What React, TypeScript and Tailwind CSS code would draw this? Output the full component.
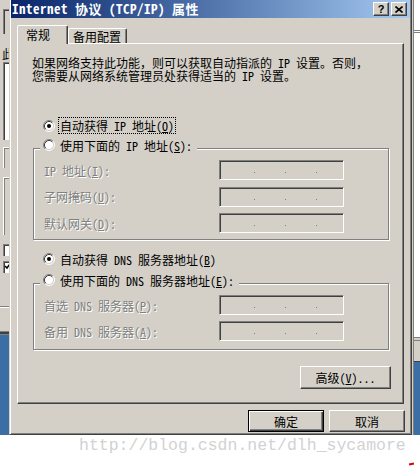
import React from "react";

function Radio({ checked }: { checked?: boolean }) {
  return (
    <svg width="12" height="12" viewBox="0 0 12 12" className="shrink-0">
      <circle cx="6" cy="6" r="4.5" fill="#ffffff" />
      <path d="M2.11 9.89 A5.5 5.5 0 0 1 9.89 2.11" stroke="#808080" fill="none" />
      <path d="M9.89 2.11 A5.5 5.5 0 0 1 2.11 9.89" stroke="#ffffff" fill="none" />
      <path d="M2.82 9.18 A4.5 4.5 0 0 1 9.18 2.82" stroke="#404040" fill="none" />
      <path d="M9.18 2.82 A4.5 4.5 0 0 1 2.82 9.18" stroke="#d4d0c8" fill="none" />
      {checked && <circle cx="6" cy="6" r="2" fill="#000000" />}
    </svg>
  );
}

function RadioRow({
  checked,
  focus,
  children,
}: {
  checked?: boolean;
  focus?: boolean;
  children: React.ReactNode;
}) {
  return (
    <div className="flex items-center">
      <Radio checked={checked} />
      <span
        className={
          focus
            ? "ml-[3px] h-[17px] flex items-center border border-dotted border-black px-[1px] whitespace-pre"
            : "ml-[3px] h-[17px] flex items-center border border-transparent px-[1px] whitespace-pre"
        }
      >
        {children}
      </span>
    </div>
  );
}

function IpBox() {
  return (
    <div className="w-[125px] h-[20px] bg-[#d4d0c8] border border-t-[#808080] border-l-[#808080] border-r-white border-b-white shadow-[inset_1px_1px_0_#404040,inset_-1px_-1px_0_#d4d0c8]">
      <div className="flex pl-[34px] pt-[11px] gap-[30px]">
        <span className="block w-px h-px bg-[#808080]" />
        <span className="block w-px h-px bg-[#808080]" />
        <span className="block w-px h-px bg-[#808080]" />
      </div>
    </div>
  );
}

function FieldRow({ children }: { children: React.ReactNode }) {
  return (
    <div className="flex items-center h-[20px]">
      <div className="w-[175px] whitespace-pre text-[#808080] [text-shadow:1px_1px_0_#ffffff]">{children}</div>
      <IpBox />
    </div>
  );
}

function Button({
  children,
  w,
  def,
}: {
  children: React.ReactNode;
  w: string;
  def?: boolean;
}) {
  if (def) {
    return (
      <div
        className={`${w} h-[22px] flex items-center justify-center bg-[#d4d0c8] border border-black shadow-[inset_1px_1px_0_#ffffff,inset_-1px_-1px_0_#404040,inset_-2px_-2px_0_#808080] whitespace-pre`}
      >
        {children}
      </div>
    );
  }
  return (
    <div
      className={`${w} flex items-center justify-center bg-[#d4d0c8] border border-t-white border-l-white border-r-[#404040] border-b-[#404040] shadow-[inset_-1px_-1px_0_#808080] whitespace-pre`}
    >
      {children}
    </div>
  );
}

function TitleButton({ children }: { children: React.ReactNode }) {
  return (
    <div className="w-[16px] h-[14px] flex items-center justify-center bg-[#d4d0c8] border border-t-white border-l-white border-r-[#404040] border-b-[#404040] shadow-[inset_-1px_-1px_0_#808080]">
      {children}
    </div>
  );
}

function LeftStrip() {
  return (
    <div className="w-[9px] h-[435px] shrink-0 flex flex-col bg-[#d4d0c8] overflow-hidden">
      <div className="mt-[9px] ml-[3px] h-[25px] border-l border-t border-[#808080] shadow-[inset_1px_1px_0_#404040]" />
      <div className="mt-[13px] ml-[2px] h-[13px] text-[12px] leading-[13px] whitespace-nowrap">此</div>
      <div className="mt-[2px] ml-[3px] h-[78px] bg-white border-l border-t border-[#808080] shadow-[inset_1px_1px_0_#404040]" />
      <div className="mt-[7px] ml-[3px] h-[21px] border-l border-t border-white shadow-[inset_1px_1px_0_#808080]" />
      <div className="mt-[9px] ml-[3px] h-[58px] border-l border-t border-white shadow-[inset_1px_1px_0_#808080]" />
      <div className="mt-[9px] ml-[3px] h-[12px] bg-white border-l border-t border-[#808080] shadow-[inset_1px_1px_0_#404040]" />
      <div className="mt-[5px] ml-[3px] h-[12px] bg-white border-l border-t border-[#808080] shadow-[inset_1px_1px_0_#404040]">
        <svg width="6" height="10" viewBox="0 0 6 10">
          <path d="M1 4 L3 6 L6 2" stroke="#000" strokeWidth="1.5" fill="none" />
        </svg>
      </div>
      <div className="mt-[33px] h-px bg-[#808080]" />
      <div className="h-px bg-white" />
      <div className="mt-[23px] h-px bg-[#808080]" />
      <div className="h-[2px] bg-[#404040]" />
      <div className="h-px bg-[#808080]" />
      <div className="flex-1 bg-[#3a6ea5]" />
    </div>
  );
}

function RightStrip() {
  return (
    <div className="w-[8px] h-[435px] shrink-0 flex flex-col bg-white border-l border-l-[#d4d0c8]">
      <div className="flex-1 flex flex-col border-l border-l-[#808080]">
        <div className="h-[30px]" />
        <div className="h-px bg-[#808080]" />
        <div className="h-px bg-white" />
        <div className="h-px bg-[#808080]" />
        <div className="h-[304px]" />
        <div className="h-px bg-[#808080]" />
        <div className="h-[2px] bg-[#d4d0c8]" />
        <div className="h-px bg-[#808080]" />
        <div className="h-[20px] bg-[#d4d0c8]" />
        <div className="h-px bg-[#404040]" />
        <div className="flex-1 bg-[#3a6ea5]" />
      </div>
    </div>
  );
}

function Dialog() {
  return (
    <div className="w-[403px] h-[435px] shrink-0 flex flex-col bg-[#d4d0c8] border-l border-l-[#d4d0c8] border-r border-r-[#404040] border-b border-b-[#404040] shadow-[inset_1px_0_0_#ffffff,inset_-1px_-1px_0_#808080] px-[1px]">
      {/* Title bar */}
      <div className="flex items-center h-[18px] bg-linear-to-r from-[#0a246a] to-[#a6caf0] pl-[1px] pr-[3px]">
        <div className="flex-1 font-bold text-white text-[13px] leading-[14px] tracking-[0.5px] whitespace-pre">
          Internet 协议 (TCP/IP) 属性
        </div>
        <div className="flex gap-[2px]">
          <TitleButton>
            <span className="font-bold text-[11px] leading-[11px] text-black [font-family:'Liberation_Sans',sans-serif]">?</span>
          </TitleButton>
          <TitleButton>
            <svg width="8" height="7" viewBox="0 0 8 7">
              <path d="M0.5 0.5 L7.5 6.5 M7.5 0.5 L0.5 6.5" stroke="#000" strokeWidth="1.6" fill="none" />
            </svg>
          </TitleButton>
        </div>
      </div>

      {/* Tabs */}
      <div className="flex items-end h-[18px] mt-[7px] ml-[6px]">
        <div className="relative z-10 w-[51px] h-[19px] -mb-px bg-[#d4d0c8] border-l border-t border-r border-l-white border-t-white border-r-[#404040] shadow-[inset_-1px_0_0_#808080] rounded-t-[2px] pl-[8px] pt-[2px]">
          常规
        </div>
        <div className="w-[59px] h-[15px] bg-[#d4d0c8] border-l border-t border-r border-l-white border-t-white border-r-[#404040] shadow-[inset_-1px_0_0_#808080] rounded-t-[2px] pl-[4px] pt-[1px]">
          备用配置
        </div>
      </div>

      {/* Panel */}
      <div className="flex flex-col w-[387px] h-[361px] ml-[6px] border border-l-white border-t-white border-r-[#404040] border-b-[#404040] shadow-[inset_-1px_-1px_0_#808080]">
        <div className="mt-[12px] ml-[14px] whitespace-pre">
          <div>如果网络支持此功能，则可以获取自动指派的 IP 设置。否则，</div>
          <div>您需要从网络系统管理员处获得适当的 IP 设置。</div>
        </div>

        <div className="mt-[35px] ml-[25px] h-[17px] flex items-center">
          <RadioRow checked focus>
            自动获得 IP 地址(<u>O</u>)
          </RadioRow>
        </div>

        <div className="relative mt-[14px] ml-[15px] w-[356px] h-[92px] border border-[#808080] shadow-[inset_1px_1px_0_#ffffff,1px_1px_0_#ffffff] pt-[11px] pl-[10px] flex flex-col gap-[6.5px]">
          <div className="absolute left-[6px] top-[-12px] h-[16px] flex items-center bg-[#d4d0c8] pl-[3px] pr-[3px]">
            <RadioRow>
              使用下面的 IP 地址(<u>S</u>):
            </RadioRow>
          </div>
          <FieldRow>
            IP 地址(<u>I</u>):
          </FieldRow>
          <FieldRow>
            子网掩码(<u>U</u>):
          </FieldRow>
          <FieldRow>
            默认网关(<u>D</u>):
          </FieldRow>
        </div>

        <div className="mt-[11px] ml-[25px] h-[16px] flex items-center">
          <RadioRow checked>
            自动获得 DNS 服务器地址(<u>B</u>)
          </RadioRow>
        </div>

        <div className="relative mt-[16px] ml-[15px] w-[356px] h-[67px] border border-[#808080] shadow-[inset_1px_1px_0_#ffffff,1px_1px_0_#ffffff] pt-[11px] pl-[10px] flex flex-col gap-[6px]">
          <div className="absolute left-[6px] top-[-12px] h-[16px] flex items-center bg-[#d4d0c8] pl-[3px] pr-[3px]">
            <RadioRow>
              使用下面的 DNS 服务器地址(<u>E</u>):
            </RadioRow>
          </div>
          <FieldRow>
            首选 DNS 服务器(<u>P</u>):
          </FieldRow>
          <FieldRow>
            备用 DNS 服务器(<u>A</u>):
          </FieldRow>
        </div>

        <div className="mt-[16px] mr-[12px] self-end">
          <Button w="w-[91px] h-[23px]">
            高级(<u>V</u>)...
          </Button>
        </div>
      </div>

      {/* Bottom buttons */}
      <div className="flex justify-end gap-[5px] mt-[6px] pr-[5px]">
        <Button w="w-[76px]" def>
          确定
        </Button>
        <Button w="w-[76px] h-[22px]">取消</Button>
      </div>
    </div>
  );
}

export default function App() {
  return (
    <div className="relative w-[420px] h-[466px] overflow-hidden bg-white text-[12px] leading-[13px] text-black [font-family:'Noto_Sans_Mono_CJK_SC','Liberation_Mono','Noto_Sans_CJK_SC',monospace]">
      <div className="flex h-[435px]">
        <LeftStrip />
        <Dialog />
        <RightStrip />
      </div>
      <div className="pl-[79px] pt-[2px] text-[16.5px] leading-[17px] text-[#d2d2d2] whitespace-pre [font-family:'Liberation_Mono',monospace]">
        http://blog.csdn.net/dlh_sycamore
      </div>
      <div className="absolute left-[409px] top-[463px] w-[5px] h-[2px] bg-[#e00000] -rotate-12" />
    </div>
  );
}
